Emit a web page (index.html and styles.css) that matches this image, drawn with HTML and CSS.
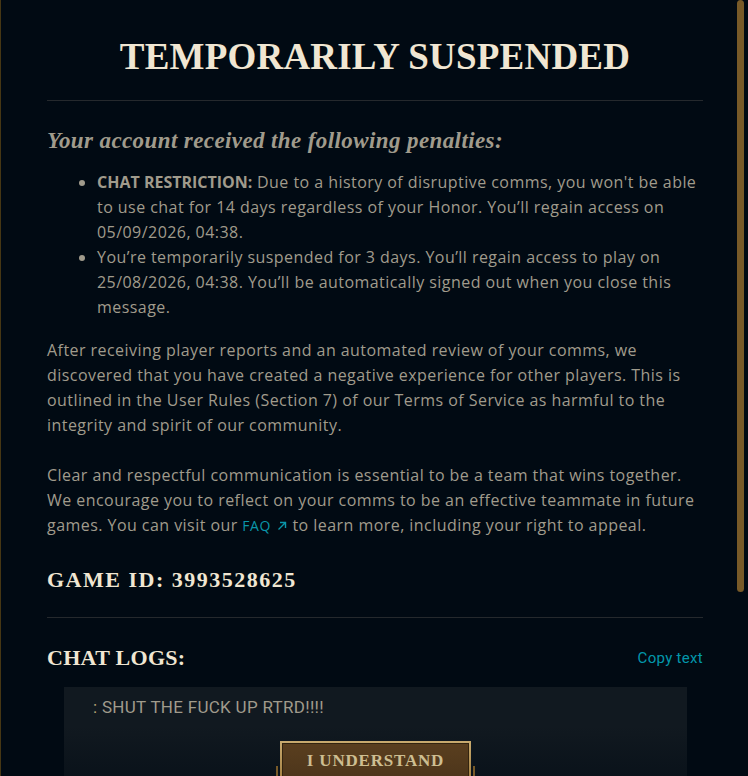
FILE: index.html
```html
<!DOCTYPE html>
<html lang="en">
<head>
<meta charset="utf-8">
<title>Temporarily Suspended</title>
<link rel="stylesheet" href="styles.css">
</head>
<body>
<div class="frame">
  <main class="content">
    <h1 class="title">TEMPORARILY SUSPENDED</h1>
    <hr class="rule">
    <h2 class="subhead">Your account received the following penalties:</h2>
    <ul class="penalties">
      <li><strong>CHAT RESTRICTION:</strong> Due to a history of disruptive comms, you won't be able to use chat for 14 days regardless of your Honor. You’ll regain access on 05/09/2026, 04:38.</li>
      <li>You’re temporarily suspended for 3 days. You’ll regain access to play on 25/08/2026, 04:38. You’ll be automatically signed out when you close this message.</li>
    </ul>
    <p class="para">After receiving player reports and an automated review of your comms, we discovered that you have created a negative experience for other players. This is outlined in the User Rules (Section 7) of our Terms of Service as harmful to the integrity and spirit of our community.</p>
    <p class="para">Clear and respectful communication is essential to be a team that wins together. We encourage you to reflect on your comms to be an effective teammate in future games. You can visit our <a class="link" href="#">FAQ<svg class="link-icon" viewBox="0 0 12 12" width="12" height="12"><path d="M2.5 9.5 L9.5 2.5 M4 2.5 H9.5 V8" fill="none" stroke="currentColor" stroke-width="1.4"/></svg></a> to learn more, including your right to appeal.</p>
    <h3 class="game-id">GAME ID: 3993528625</h3>
    <hr class="rule rule-low">
    <div class="logs-head">
      <h3 class="logs-title">CHAT LOGS:</h3>
      <span class="copy">Copy text</span>
    </div>
    <div class="logs">
      <p class="log-line"><span class="log-name">:</span> SHUT THE FUCK UP RTRD!!!!</p>
    </div>
  </main>
  <div class="scroll-thumb"></div>
  <footer class="footer">
    <button class="btn" type="button">I UNDERSTAND</button>
  </footer>
</div>
</body>
</html>
```

FILE: styles.css
```css
html, body {
  margin: 0;
  padding: 0;
  background: #010a13;
}

.frame {
  position: relative;
  width: 748px;
  height: 776px;
  overflow: hidden;
  background: #010a13;
  border-left: 1px solid #463714;
  box-sizing: border-box;
}

.content {
  padding: 35px 45px 0 46px;
  font-family: "Open Sans", "Liberation Sans", sans-serif;
  font-size: 16px;
  line-height: 25px;
  letter-spacing: 0.45px;
  color: #a09b8c;
}

.title {
  margin: 0;
  font-family: "Liberation Serif", serif;
  font-weight: 700;
  font-size: 37px;
  line-height: 44px;
  letter-spacing: 0.2px;
  text-align: center;
  color: #f0e6d2;
}

.rule {
  margin: 21px 0 0;
  border: 0;
  height: 1px;
  background: #25292d;
}

.rule-low {
  margin-top: 23px;
}

.subhead {
  margin: 26px 0 0;
  font-family: "Liberation Serif", serif;
  font-style: italic;
  font-weight: 700;
  font-size: 23px;
  line-height: 28px;
  letter-spacing: 0.4px;
  color: #a09b8c;
}

.penalties {
  margin: 15px 0 0;
  padding-left: 50px;
}

.penalties strong {
  font-weight: 700;
  letter-spacing: 0;
}

.para {
  margin: 18px 0 0;
}

.para + .para {
  margin-top: 25px;
}

.link {
  color: #0a96aa;
  text-decoration: none;
  font-size: 14px;
  letter-spacing: 0.5px;
}

.link-icon {
  margin-left: 5px;
  vertical-align: -1px;
}

.game-id {
  margin: 28px 0 0;
  font-family: "Liberation Serif", serif;
  font-weight: 700;
  font-size: 22px;
  line-height: 28px;
  letter-spacing: 1.5px;
  color: #f0e6d2;
}

.logs-head {
  display: flex;
  align-items: center;
  justify-content: space-between;
  margin-top: 26px;
}

.logs-title {
  margin: 0;
  font-family: "Liberation Serif", serif;
  font-weight: 700;
  font-size: 22px;
  line-height: 28px;
  letter-spacing: 0.3px;
  color: #f0e6d2;
}

.copy {
  font-family: Roboto, "Liberation Sans", sans-serif;
  font-size: 15px;
  letter-spacing: 0.3px;
  color: #0397ab;
}

.logs {
  margin: 15px 16px 0 17px;
  padding: 10px 29px;
  min-height: 120px;
  background: #111920;
}

.log-line {
  margin: 0;
  font-family: Roboto, "Liberation Sans", sans-serif;
  font-size: 17px;
  line-height: 20px;
  letter-spacing: 0.3px;
  color: #a09b8c;
}

.log-name {
  color: #b9a577;
}

.scroll-thumb {
  position: absolute;
  top: 0;
  left: 736px;
  width: 7px;
  height: 592px;
  border-radius: 4px;
  background: #785a28;
}

.footer {
  position: absolute;
  left: 0;
  right: 0;
  bottom: 0;
  height: 50px;
  display: flex;
  justify-content: center;
  align-items: flex-start;
  padding-top: 15px;
  padding-left: 2px;
  box-sizing: border-box;
  background: linear-gradient(to bottom, rgba(1, 10, 19, 0), rgba(1, 10, 19, 0.45));
}

.btn {
  position: relative;
  width: 191px;
  height: 44px;
  padding: 6px 0 0;
  border: 2px solid #c8aa6e;
  border-image: linear-gradient(to bottom, #c8aa6e, #a07b3c) 1;
  background: linear-gradient(to bottom, #5a3f1f, #4b341a);
  box-shadow: inset 0 0 0 1px #33240f;
  font-family: "Liberation Serif", serif;
  font-weight: 700;
  font-size: 17px;
  letter-spacing: 0.8px;
  color: #cdbe91;
  display: flex;
  justify-content: center;
  align-items: flex-start;
  line-height: 24px;
}

.btn::before,
.btn::after {
  content: "";
  position: absolute;
  top: 23px;
  width: 2px;
  height: 20px;
  background: #785a28;
}

.btn::before {
  left: -6px;
}

.btn::after {
  right: -6px;
}
```
